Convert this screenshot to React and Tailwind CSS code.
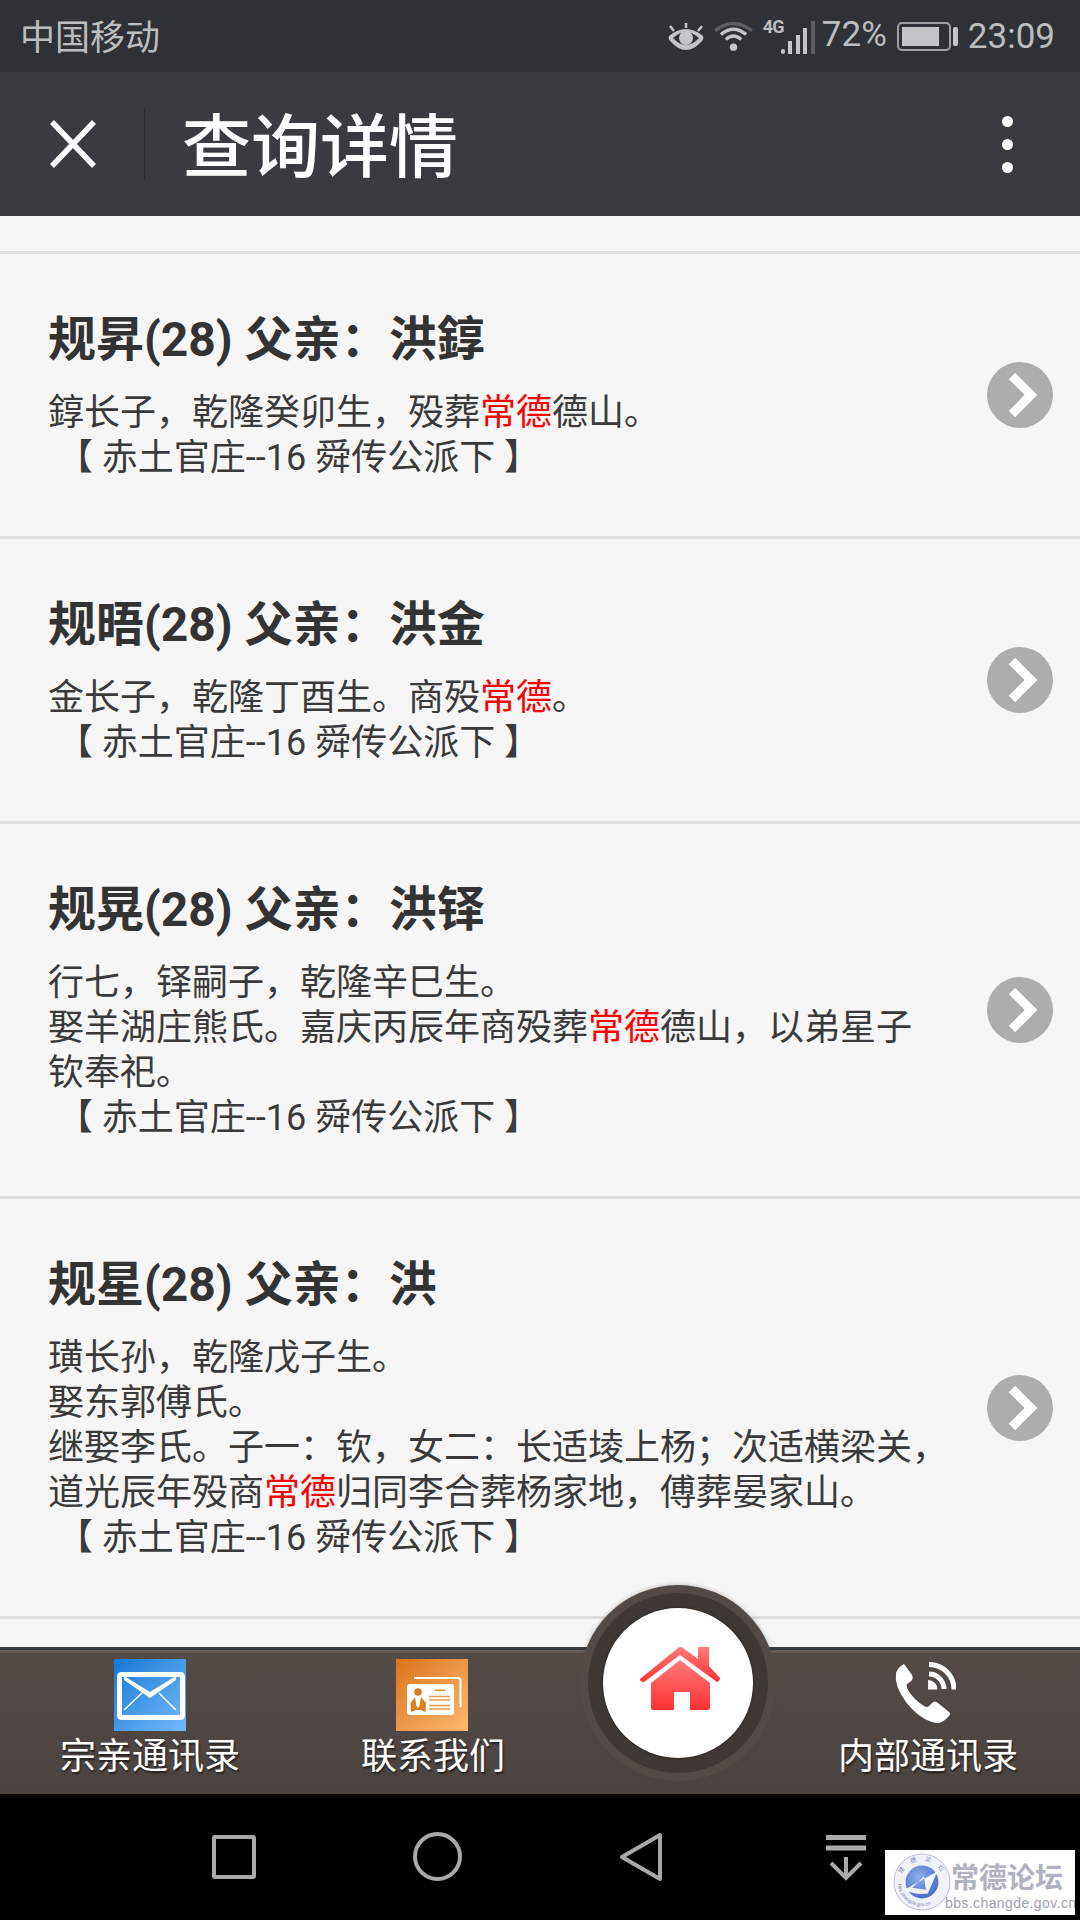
import React from "react";

const Chevron = () => (
  <svg viewBox="0 0 66 66" className="w-[66px] h-[66px] shrink-0">
    <circle cx="33" cy="33" r="33" fill="#adadad" />
    <path d="M25 14 L44 33 L25 52" fill="none" stroke="#fff" strokeWidth="9" />
  </svg>
);

const R = ({ children }) => <span className="text-[#ff0000]">{children}</span>;

const Source = () => <div>{"\u00a0"}【 赤土官庄--16 舜传公派下 】</div>;

const Row = ({ title, children }) => (
  <div className="flex items-center border-t-[3px] border-[#dddddd] pl-[48px] pr-[27px]">
    <div className="flex-1 pr-[30px] pt-[56px] pb-[55px]">
      <div className="text-[48px] leading-[60px] font-bold text-[#333333] mb-[21px]">{title}</div>
      <div className="text-[36px] leading-[45px] text-[#3a3a3a]">
        {children}
        <Source />
      </div>
    </div>
    <Chevron />
  </div>
);

const Mail = () => (
  <div className="w-[72px] h-[72px] bg-gradient-to-br from-[#0f78d6] to-[#72bbfb]">
    <svg viewBox="0 0 72 72" className="w-[72px] h-[72px]">
      <rect x="5.5" y="15.5" width="63" height="43" rx="2" fill="none" stroke="#fff" strokeWidth="5" />
      <path d="M10 17 L36 33 L62 17 L62 21 L36 39 L10 21 Z" fill="#fff" />
      <path d="M10 51 L28 34 M62 51 L45 34" stroke="#fff" strokeWidth="1.5" />
    </svg>
  </div>
);

const Card = () => (
  <div className="w-[72px] h-[72px] mr-[2px] bg-gradient-to-br from-[#da7410] to-[#fdb970]">
    <svg viewBox="0 0 72 72" className="w-[72px] h-[72px]">
      <path d="M18 19 H62 Q64.5 19 64.5 21.500 V48" fill="none" stroke="#fff" strokeWidth="2" />
      <rect x="11" y="25" width="47" height="31" rx="3" fill="#fff" />
      <circle cx="22" cy="33" r="3.800" fill="#da7c1c" />
      <path d="M19 38 L14.500 44 L15 53 L20 51 L25 51 L29.500 53 L30 44 L25 38 L23.500 47 L22 49 L20.500 47 Z" fill="#dc7f22" />
      <rect x="39" y="30.500" width="10" height="1.600" fill="#e88a30" />
      <path d="M33 37.500 H54 M33 41 H54 M33 46.500 H54 M33 50 H54" stroke="#ef9a47" strokeWidth="1.500" />
    </svg>
  </div>
);

const Phone = () => (
  <svg viewBox="0 0 62 62" className="w-[62px] h-[62px]">
    <path d="M10 2 L18 13 Q20 17 16 20 L13 22 Q12 24 14 28 Q20 38 30 44 Q33 46 35 44 L38 41 Q41 38 44 41 L55 50 Q57 52 55 54 Q48 62 42 61 Q26 58 12 40 Q0 24 2 11 Q4 5 10 2Z" fill="#fff" />
    <path d="M35 2.500 A25 25 0 0 1 60 27.500" fill="none" stroke="#fff" strokeWidth="5" />
    <path d="M35 12 A15 15 0 0 1 50 27" fill="none" stroke="#fff" strokeWidth="5" />
    <path d="M34 27.500 L34 18 A9.500 9.500 0 0 1 43.500 27.500 Z" fill="#fff" />
  </svg>
);

const House = () => (
  <svg viewBox="0 0 80 64" className="w-[80px] h-[64px]">
    <defs>
      <linearGradient id="hg" x1="0" y1="0" x2="0" y2="1">
        <stop offset="0" stopColor="#ff7c7c" />
        <stop offset="1" stopColor="#ff3030" />
      </linearGradient>
    </defs>
    <path fill="url(#hg)" d="M58 0 H69 V19 L80 31 Q80 34 77 35 L40 8 L4 35 Q0 35 0 32 L38 1 Q40 -1 43 1 L58 12 Z" />
    <path fill="url(#hg)" d="M40 13 L70 36 V61 Q70 63 68 63 H50 V45 H34 V63 H13 Q11 63 11 61 V36 Z" />
  </svg>
);

const Label = ({ children }) => (
  <div className="text-[36px] leading-[40px] text-white mt-[6px] [text-shadow:1px_2px_2px_rgba(0,0,0,0.55)]">{children}</div>
);

export default function App() {
  return (
    <div className="relative w-[1080px] h-[1920px] overflow-hidden flex flex-col bg-[#f6f6f6] [font-family:Roboto,'Noto_Sans_CJK_SC',sans-serif]">
      {/* status bar */}
      <div className="h-[72px] bg-[#303136] flex items-center pl-[20px] pr-[25px] text-[#bcbdbf] shrink-0">
        <div className="text-[35px] leading-[40px] mt-[5px]">中国移动</div>
        <div className="flex-1" />
        <svg viewBox="0 0 36 30" className="w-[36px] h-[30px] mt-[3px]">
          <path d="M1 13 Q18 -1 35 13 Q36 15 34 18 Q18 36 2 18 Q0 15 1 13Z M5 15 Q18 29 31 15 Q18 3 5 15Z" fill="#c4c5c7" fillRule="evenodd" />
          <circle cx="18" cy="15" r="7" fill="#c4c5c7" />
          <path d="M18 0 V5 M2 3 L6 8 M34 3 L30 8" stroke="#c4c5c7" strokeWidth="2.500" />
        </svg>
        <svg viewBox="0 0 40 32" className="w-[39px] h-[31px] ml-[10px]">
          <path d="M1 10 Q20 -5 39 10" fill="none" stroke="#5c5d61" strokeWidth="3.500" />
          <path d="M7 14 Q20 3 33 14 M12 19 Q20 12 28 19" fill="none" stroke="#c4c5c7" strokeWidth="3.500" />
          <circle cx="20" cy="27" r="3.800" fill="#c4c5c7" />
        </svg>
        <div className="relative w-[52px] h-[34px] ml-[10px] flex items-end gap-[3.500px] pl-[18px] mt-[1px]">
          <div className="absolute left-0 top-0 text-[18px] leading-[14px] font-bold tracking-[-1px]">4G</div>
          <div className="w-[4px] h-[5px] bg-[#c4c5c7] rounded-[2px]" />
          <div className="w-[4px] h-[13px] bg-[#c4c5c7]" />
          <div className="w-[4px] h-[19px] bg-[#c4c5c7]" />
          <div className="w-[4px] h-[26px] bg-[#c4c5c7]" />
          <div className="w-[4px] h-[33px] bg-[#5c5d61]" />
        </div>
        <div className="text-[35px] leading-[40px] ml-[7px] -mt-[3px]">72%</div>
        <div className="flex items-center ml-[10px]">
          <div className="w-[54px] h-[29px] border-2 border-[#9fa0a3] rounded-[5px] p-[3px]">
            <div className="w-[37px] h-full bg-[#c4c5c7]" />
          </div>
          <div className="w-[5px] h-[19px] bg-[#c4c5c7] ml-[2px] rounded-[2px]" />
        </div>
        <div className="text-[35px] leading-[40px] ml-[10px] mt-[2px]">23:09</div>
      </div>

      {/* nav */}
      <div className="h-[144px] bg-[#3a3b40] flex items-center shrink-0">
        <svg viewBox="0 0 46 48" className="w-[46px] h-[48px] ml-[50px]">
          <path d="M2 2 L44 46 M44 2 L2 46" stroke="#fff" strokeWidth="5.500" />
        </svg>
        <div className="w-[1px] h-[72px] bg-[#2a2b2e] ml-[48px]" />
        <div className="text-[69px] leading-[80px] font-medium text-white ml-[37px] mt-[10px]">查询详情</div>
        <div className="flex-1" />
        <div className="flex flex-col gap-[12px] mr-[67px]">
          <div className="w-[11px] h-[11px] rounded-full bg-white" />
          <div className="w-[11px] h-[11px] rounded-full bg-white" />
          <div className="w-[11px] h-[11px] rounded-full bg-white" />
        </div>
      </div>

      {/* list */}
      <div className="flex-1 overflow-hidden pt-[35px]">
        <Row title="规昇(28) 父亲：洪錞">
          <div>錞长子，乾隆癸卯生，殁葬<R>常德</R>德山。</div>
        </Row>
        <Row title="规晤(28) 父亲：洪金">
          <div>金长子，乾隆丁酉生。商殁<R>常德</R>。</div>
        </Row>
        <Row title="规晃(28) 父亲：洪铎">
          <div>行七，铎嗣子，乾隆辛巳生。</div>
          <div>娶羊湖庄熊氏。嘉庆丙辰年商殁葬<R>常德</R>德山，以弟星子<br />钦奉祀。</div>
        </Row>
        <Row title="规星(28) 父亲：洪">
          <div>璜长孙，乾隆戊子生。</div>
          <div>娶东郭傅氏。</div>
          <div>继娶李氏。子一：钦，女二：长适堎上杨；次适横梁关，道光辰年殁商<R>常德</R>归同李合葬杨家地，傅葬晏家山。</div>
        </Row>
        <div className="border-t-[3px] border-[#dddddd]" />
      </div>

      {/* bottom tabs */}
      <div className="h-[147px] shrink-0 border-t-[3px] border-[#3a3b40] bg-gradient-to-b from-[#544b47] to-[#4b4340]">
        <div className="h-[3px] bg-[#655c58]" />
        <div className="flex pt-[6px]">
          <div className="w-[300px] flex flex-col items-center"><Mail /><Label>宗亲通讯录</Label></div>
          <div className="w-[266px] flex flex-col items-center"><Card /><Label>联系我们</Label></div>
          <div className="w-[214px]" />
          <div className="w-[296px] flex flex-col items-center">
            <div className="h-[72px] pt-[3px] mr-[6px]"><Phone /></div>
            <Label>内部通讯录</Label>
          </div>
        </div>
      </div>

      {/* android nav */}
      <div className="h-[126px] bg-black shrink-0 flex items-start pt-[38px] pl-[212px] text-[#a9a9a9]">
        <div className="w-[44px] h-[44px] border-[4px] border-[#a9a9a9] rounded-[3px] mt-[3px]" />
        <div className="w-[49px] h-[49px] border-[4px] border-[#a9a9a9] rounded-full ml-[157px]" />
        <svg viewBox="0 0 44 50" className="w-[44px] h-[50px] ml-[157px]">
          <path d="M41 3 V47 L3 25 Z" fill="none" stroke="#a9a9a9" strokeWidth="4" strokeLinejoin="round" />
        </svg>
        <svg viewBox="0 0 40 46" className="w-[40px] h-[46px] ml-[163px] mt-[3px]">
          <path d="M0 2.500 H40 M0 13 H40" stroke="#a9a9a9" strokeWidth="5" />
          <path d="M20 22 V43 M5 28 L20 43 L35 28" fill="none" stroke="#a9a9a9" strokeWidth="4" />
        </svg>
      </div>

      {/* home button overlay */}
      <div className="absolute left-[580px] top-[1585px] w-[196px] h-[196px] rounded-full bg-[#534a46] flex items-center justify-center shadow-[0_0_4px_rgba(80,70,66,0.4)]">
        <div className="w-[180px] h-[180px] rounded-full bg-[#3f3835] flex items-center justify-center">
          <div className="w-[150px] h-[150px] rounded-full bg-white flex items-center justify-center shadow-[0_0_3px_rgba(0,0,0,0.5)] pb-[8px] pl-[4px]">
            <House />
          </div>
        </div>
      </div>

      {/* watermark */}
      <div className="absolute left-[885px] top-[1850px] w-[190px] h-[65px] bg-white flex items-start overflow-hidden">
        <svg viewBox="0 0 60 60" className="w-[58px] h-[58px] ml-[8px] mt-[3px] shrink-0">
          <defs>
            <radialGradient id="lg" cx="0.4" cy="0.35" r="0.8">
              <stop offset="0" stopColor="#8fb0ea" />
              <stop offset="1" stopColor="#3b62c0" />
            </radialGradient>
            <path id="top" d="M8 30 A22 22 0 0 1 52 30" />
            <path id="bot" d="M5 30 A25 25 0 0 0 55 30" />
          </defs>
          <circle cx="30" cy="30" r="29" fill="#f1f2f8" stroke="#b8bcd6" strokeWidth="1" />
          <circle cx="30" cy="30" r="17" fill="url(#lg)" />
          <path d="M12 38 L46 19 L36 42 Q24 44 12 38Z M32 24 L20 36 L34 38 Z" fill="#fff" fillRule="evenodd" opacity="0.9" />
          <text fontSize="6.500" fill="#7f86b8"><textPath href="#top" startOffset="12%" textLength="50">常 德 论 坛</textPath></text>
          <text fontSize="5.200" fill="#7f86b8"><textPath href="#bot" startOffset="3%">bbs.changde.gov.cn</textPath></text>
        </svg>
        <div className="flex flex-col items-start">
          <div className="text-[28px] leading-[32px] mt-[10px] text-[#b0b2bf] [font-family:'Noto_Sans_CJK_SC',sans-serif] font-bold whitespace-nowrap">常德论坛</div>
          <div className="text-[14px] leading-[14px] tracking-[0.4px] mt-[4px] -ml-[6px] text-[#a0a2af] [font-family:'Liberation_Sans',sans-serif] whitespace-nowrap">bbs.changde.gov.cn</div>
        </div>
      </div>
    </div>
  );
}
